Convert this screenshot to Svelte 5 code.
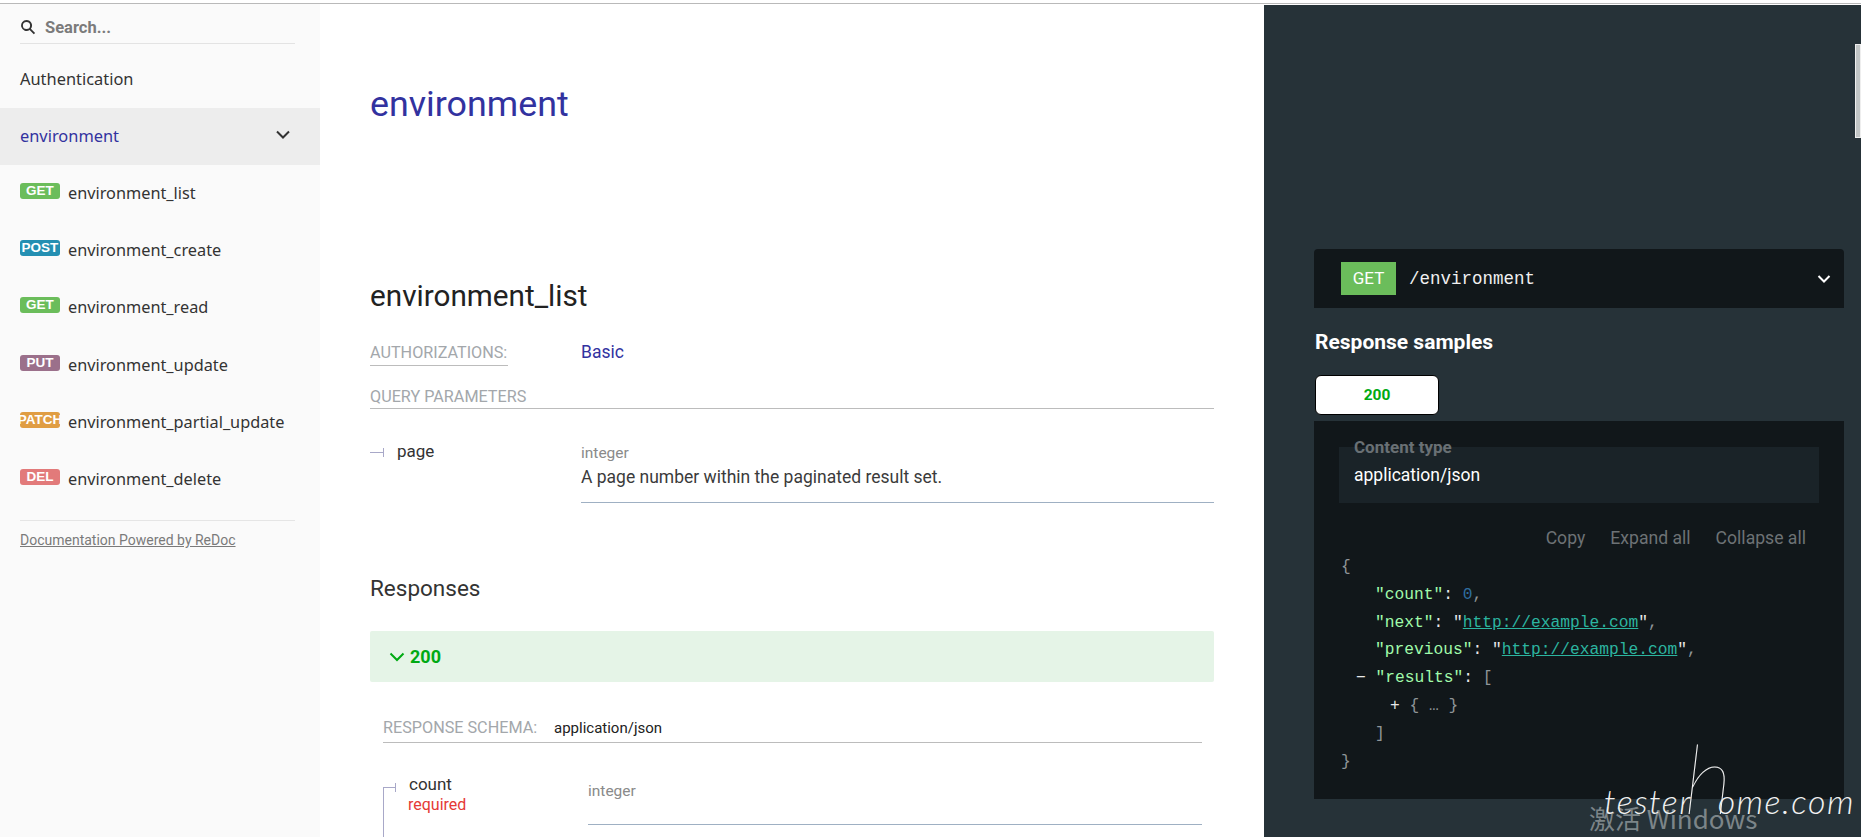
<script>
  const operations = [
    { method: "GET", color: "#6bbd5b", name: "environment_list" },
    { method: "POST", color: "#248fb2", name: "environment_create" },
    { method: "GET", color: "#6bbd5b", name: "environment_read" },
    { method: "PUT", color: "#9b708b", name: "environment_update" },
    { method: "PATCH", color: "#e09d43", name: "environment_partial_update" },
    { method: "DEL", color: "#e27a7a", name: "environment_delete" }
  ];
</script>

<div class="page">
  <aside class="sidebar">
    <div class="search">
      <svg width="16" height="16" viewBox="0 0 16 16"><path d="M6.5 1a5.5 5.5 0 0 1 4.4 8.8l4.2 4.2-1.3 1.3-4.2-4.2A5.5 5.5 0 1 1 6.5 1zm0 1.9a3.6 3.6 0 1 0 0 7.2 3.6 3.6 0 0 0 0-7.2z" fill="#333"/></svg>
      <span>Search...</span>
    </div>
    <div class="nav-item auth">Authentication</div>
    <div class="nav-item group">
      <span>environment</span>
      <svg width="16" height="10" viewBox="0 0 16 10"><path d="M2 1.5l6 6 6-6" fill="none" stroke="#333" stroke-width="2"/></svg>
    </div>
    <ul class="ops">
      {#each operations as op}
        <li>
          <span class="badge" style="background: {op.color}"><span>{op.method}</span></span>
          <span class="op-name">{op.name}</span>
        </li>
      {/each}
    </ul>
    <div class="powered"><a href="#top">Documentation Powered by ReDoc</a></div>
  </aside>

  <main class="content">
    <h1>environment</h1>
    <h2>environment_list</h2>
    <div class="auth-row">
      <span class="auth-label">AUTHORIZATIONS:</span>
      <span class="basic">Basic</span>
    </div>
    <div class="section-title">QUERY PARAMETERS</div>
    <div class="param">
      <div class="param-name"><i class="tick"></i>page</div>
      <div class="param-info">
        <div class="type">integer</div>
        <div class="desc">A page number within the paginated result set.</div>
      </div>
    </div>
    <h3>Responses</h3>
    <div class="resp-bar">
      <svg width="16" height="10" viewBox="0 0 16 10"><path d="M1.5 1.5l6.5 6.5 6.5-6.5" fill="none" stroke="#00aa13" stroke-width="2"/></svg>
      <span>200</span>
    </div>
    <div class="schema">
      <div class="schema-head">
        <span class="schema-label">RESPONSE SCHEMA:</span>
        <span class="schema-type">application/json</span>
      </div>
      <div class="field">
        <div class="field-name">
          <i class="tree"></i>
          <div>count</div>
          <div class="required">required</div>
        </div>
        <div class="field-info"><span class="type">integer</span></div>
      </div>
    </div>
  </main>

  <section class="panel">
    <i class="scroll-thumb"></i>
    <div class="endpoint">
      <span class="get">GET</span>
      <span class="path">/environment</span>
      <svg width="14" height="10" viewBox="0 0 14 10"><path d="M1.5 2l5.5 5.5L12.5 2" fill="none" stroke="#fff" stroke-width="2"/></svg>
    </div>
    <h4>Response samples</h4>
    <div class="tab">200</div>
    <div class="sample">
      <div class="ctype">
        <span class="ctype-label">Content type</span>
        <span class="ctype-value">application/json</span>
      </div>
      <div class="actions">
        <span>Copy</span>
        <span>Expand all</span>
        <span>Collapse all</span>
      </div>
      <div class="code">
        <div class="p">&#123;</div>
        <div class="l1"><span class="k">"count"</span><span class="w">:&nbsp;</span><span class="n">0</span><span class="p">,</span></div>
        <div class="l1"><span class="k">"next"</span><span class="w">:&nbsp;"</span><a class="u" href="#top">http://example.com</a><span class="w">"</span><span class="p">,</span></div>
        <div class="l1"><span class="k">"previous"</span><span class="w">:&nbsp;"</span><a class="u" href="#top">http://example.com</a><span class="w">"</span><span class="p">,</span></div>
        <div class="l0"><span class="w">−&nbsp;</span><span class="k">"results"</span><span class="w">:&nbsp;</span><span class="p">[</span></div>
        <div class="l2"><span class="w">+&nbsp;</span><span class="p">&#123; … &#125;</span></div>
        <div class="l1 p">]</div>
        <div class="p">&#125;</div>
      </div>
    </div>
  </section>

  <div class="activate">激活 Windows</div>
  <div class="mark">tester<span class="mark-h">h</span>ome.com</div>
</div>

<style>
  :global(body) {
    margin: 0;
    background: #fff;
  }

  .page {
    position: relative;
    display: flex;
    width: 1861px;
    height: 837px;
    overflow: hidden;
    box-sizing: border-box;
    padding-top: 3px;
    font-family: Roboto, sans-serif;
  }

  .page::before {
    content: "";
    position: absolute;
    top: 3px;
    left: 0;
    right: 0;
    height: 1px;
    background: #b9b9b9;
    z-index: 2;
  }

  /* sidebar */
  .sidebar {
    width: 320px;
    flex: none;
    background: #fafafa;
    font-family: "Noto Sans", sans-serif;
    color: #333;
  }

  .search {
    display: flex;
    align-items: center;
    gap: 9px;
    height: 41px;
    padding-top: 8px;
    box-sizing: border-box;
    margin: 0 25px 0 20px;
    border-bottom: 1px solid #e3e3e3;
    font-family: Roboto, sans-serif;
    font-size: 16.5px;
    font-weight: 700;
    color: #7b7b7b;
  }

  .nav-item {
    display: flex;
    align-items: center;
    justify-content: space-between;
    height: 57px;
    padding: 0 29px 0 20px;
    box-sizing: border-box;
    font-size: 16.4px;
  }

  .auth {
    height: 64px;
    padding-top: 5px;
  }

  .group {
    padding-bottom: 3px;
    background: #ededed;
    color: #32329f;
  }

  .ops {
    list-style: none;
    margin: 0;
    padding: 0;
  }

  .ops li {
    display: flex;
    align-items: flex-start;
    height: 57.2px;
    padding: 18px 0 0 20px;
    box-sizing: border-box;
  }

  .badge {
    display: block;
    width: 40px;
    height: 16px;
    border-radius: 3px;
    overflow: hidden;
    color: #fff;
    font-family: "Liberation Sans", sans-serif;
    font-size: 13.5px;
    font-weight: 700;
    line-height: 15px;
    text-align: center;
    white-space: nowrap;
  }

  .badge span {
    display: inline-block;
    margin: 0 -6px;
  }

  .op-name {
    margin-left: 8px;
    margin-top: -1px;
    font-size: 16.3px;
    line-height: 22px;
  }

  .powered {
    margin: 12px 25px 0 20px;
    padding-top: 11px;
    border-top: 1px solid #e5e5e5;
    font-family: Roboto, sans-serif;
    font-size: 14px;
  }

  .powered a {
    color: #7a7a7a;
  }

  /* middle column */
  .content {
    width: 944px;
    flex: none;
    box-sizing: border-box;
    padding: 0 50px;
    color: #333;
  }

  h1 {
    margin: 81px 0 0;
    font-size: 35.8px;
    line-height: 40px;
    font-weight: 400;
    color: #32329f;
  }

  h2 {
    margin: 150px 0 0;
    font-size: 29.7px;
    line-height: 44px;
    font-weight: 400;
    color: #222;
  }

  .auth-row {
    display: flex;
    align-items: center;
    margin-top: 22px;
    height: 24px;
  }

  .auth-label {
    width: 138px;
    margin-right: 73px;
    margin-top: 4px;
    height: 23px;
    box-sizing: border-box;
    border-bottom: 1px solid #bcbcbc;
    font-size: 16.2px;
    line-height: 20px;
    color: #a3a7ab;
    white-space: nowrap;
  }

  .basic {
    font-size: 17.5px;
    color: #32329f;
  }

  .section-title {
    margin-top: 22px;
    border-bottom: 1px solid #bcbcbc;
    font-size: 16.2px;
    line-height: 22px;
    color: #a3a7ab;
  }

  .param {
    display: flex;
    margin-top: 31px;
    height: 63px;
  }

  .param-name {
    display: flex;
    align-items: center;
    width: 211px;
    height: 22px;
    font-size: 17px;
  }

  .tick {
    position: relative;
    width: 14px;
    height: 1px;
    margin: 3px 13px 0 0;
    background: #a8a8c8;
  }

  .tick::after {
    content: "";
    position: absolute;
    right: 0;
    top: -4px;
    width: 1px;
    height: 9px;
    background: #a8a8c8;
  }

  .param-info {
    flex: 1;
    border-bottom: 1px solid #9fb0c3;
  }

  .type {
    margin-top: 3px;
    font-size: 15.5px;
    line-height: 20px;
    color: #8a8a8a;
  }

  .desc {
    margin-top: 2px;
    padding-bottom: 13px;
    font-size: 17.5px;
    line-height: 24px;
    color: #3b3b3b;
  }

  h3 {
    margin: 70px 0 0;
    font-size: 22.5px;
    line-height: 30px;
    font-weight: 400;
    color: #333;
  }

  .resp-bar {
    display: flex;
    align-items: center;
    gap: 5px;
    height: 51px;
    margin-top: 28px;
    padding-left: 19px;
    border-radius: 2px;
    background: #e5f4e7;
    color: #00aa13;
    font-size: 18px;
    font-weight: 700;
  }

  .schema {
    padding: 0 12px 0 13px;
  }

  .schema-head {
    display: flex;
    align-items: center;
    height: 30px;
    margin-top: 31px;
    border-bottom: 1px solid #bcbcbc;
    box-sizing: border-box;
  }

  .schema-label {
    width: 171px;
    font-size: 16.2px;
    color: #a3a7ab;
    white-space: nowrap;
  }

  .schema-type {
    font-size: 15px;
    color: #222;
  }

  .field {
    display: flex;
    margin-top: 30px;
  }

  .field-name {
    position: relative;
    width: 205px;
    flex: none;
    padding-left: 26px;
    box-sizing: border-box;
    font-size: 17px;
    line-height: 23px;
  }

  .required {
    margin-left: -1px;
    font-size: 16px;
    line-height: 18px;
    color: #e53935;
  }

  .tree {
    position: absolute;
    left: 0;
    top: 14px;
    width: 12px;
    height: 80px;
    border-top: 1px solid #a8a8c8;
    border-left: 1px solid #a8a8c8;
  }

  .tree::after {
    content: "";
    position: absolute;
    right: 0;
    top: -5px;
    width: 1px;
    height: 9px;
    background: #a8a8c8;
  }

  .field-info {
    flex: 1;
    height: 52px;
    padding-top: 8px;
    box-sizing: border-box;
    border-bottom: 1px solid #9fb0c3;
  }

  /* right column */
  .panel {
    position: relative;
    flex: 1;
    margin-top: 2px;
    background: #263238;
    padding: 244px 17px 0 50px;
    color: #fff;
  }

  .scroll-thumb {
    position: absolute;
    top: 39px;
    right: 0;
    width: 6px;
    height: 94px;
    background: #c1c5c5;
    border: 1px solid #eee;
    box-sizing: border-box;
  }

  .endpoint {
    display: flex;
    align-items: center;
    height: 59px;
    padding: 0 13px 0 27px;
    border-radius: 4px 4px 0 0;
    background: #11171a;
  }

  .get {
    width: 55px;
    height: 33px;
    background: #6bbd5b;
    font-size: 17px;
    line-height: 33px;
    text-align: center;
  }

  .path {
    flex: 1;
    margin-left: 13px;
    font-family: "Liberation Mono", monospace;
    font-size: 17.5px;
    color: #f0f0f0;
  }

  h4 {
    margin: 21px 0 0 1px;
    font-size: 21px;
    line-height: 26px;
    font-weight: 700;
  }

  .tab {
    width: 124px;
    height: 40px;
    margin: 20px 0 0 1px;
    box-sizing: border-box;
    border: 1px solid #000;
    border-radius: 6px;
    background: #fff;
    color: #00aa13;
    font-size: 15.5px;
    font-weight: 700;
    line-height: 38px;
    text-align: center;
  }

  .sample {
    height: 378px;
    margin-top: 6px;
    padding: 26px 25px 0;
    box-sizing: border-box;
    background: #11171a;
  }

  .ctype {
    position: relative;
    display: flex;
    align-items: center;
    height: 56px;
    padding: 0 15px;
    box-sizing: border-box;
    background: #1a2328;
  }

  .ctype-label {
    position: absolute;
    top: -10px;
    left: 15px;
    font-size: 17px;
    font-weight: 700;
    color: #697074;
  }

  .ctype-value {
    font-size: 17.5px;
  }

  .actions {
    display: flex;
    justify-content: flex-end;
    gap: 25px;
    margin-top: 23px;
    padding-right: 13px;
    font-size: 17.6px;
    line-height: 24px;
    color: #6d7275;
  }

  .code {
    margin: 3px 0 0 2px;
    font-family: "Liberation Mono", monospace;
    font-size: 16.25px;
    line-height: 27.8px;
  }

  .p {
    color: #8f9598;
  }

  .w {
    color: #e8e8e8;
  }

  .k {
    color: #a0fbaa;
  }

  .n {
    color: #2f6e9f;
  }

  .u {
    color: #2cb5a0;
  }

  .l0 {
    margin-left: 15px;
  }

  .l1 {
    margin-left: 34px;
  }

  .l2 {
    margin-left: 49px;
  }

  /* overlays on the screenshot */
  .activate {
    position: absolute;
    left: 1589px;
    top: 803px;
    font-family: "Noto Sans CJK SC", "Noto Sans", sans-serif;
    font-size: 26px;
    line-height: 30px;
    color: #7c8589;
  }

  .mark {
    position: absolute;
    left: 1604px;
    top: 753px;
    font-family: Lato, sans-serif;
    font-weight: 300;
    font-style: italic;
    font-size: 34px;
    line-height: 48px;
    letter-spacing: 1.5px;
    color: #f2f2f2;
    white-space: nowrap;
  }

  .mark-h {
    margin: 0 -16px 0 -8px;
    font-size: 96px;
    line-height: 48px;
    font-weight: 100;
  }
</style>
